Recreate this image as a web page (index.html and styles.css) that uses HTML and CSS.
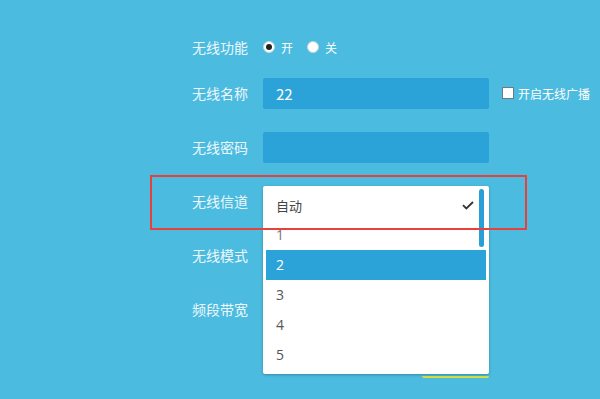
FILE: index.html
```html
<!DOCTYPE html>
<html lang="zh-CN">
<head>
<meta charset="utf-8">
<title>无线设置</title>
<link rel="stylesheet" href="styles.css">
</head>
<body>
<div class="form">
  <div class="row row-radio">
    <div class="label">无线功能</div>
    <div class="control radios">
      <span class="radio checked"></span><span class="rtext">开</span>
      <span class="radio"></span><span class="rtext">关</span>
    </div>
  </div>
  <div class="row">
    <div class="label">无线名称</div>
    <div class="control"><div class="input">22</div></div>
    <div class="extra"><span class="checkbox"></span><span class="ctext">开启无线广播</span></div>
  </div>
  <div class="row">
    <div class="label">无线密码</div>
    <div class="control"><div class="input"></div></div>
  </div>
  <div class="row">
    <div class="label">无线信道</div>
    <div class="control anchor">
      <div class="dropdown">
        <div class="opt first">自动
          <svg class="check" width="12" height="9" viewBox="0 0 12 9"><path d="M1 4.2 L4.3 7.4 L11 1" fill="none" stroke="#333" stroke-width="1.8"/></svg>
        </div>
        <div class="opt one">1</div>
        <div class="opt sel">2</div>
        <div class="opt">3</div>
        <div class="opt">4</div>
        <div class="opt">5</div>
        <div class="scrollbar"></div>
      </div>
    </div>
  </div>
  <div class="row">
    <div class="label">无线模式</div>
    <div class="control"></div>
  </div>
  <div class="row">
    <div class="label">频段带宽</div>
    <div class="control"></div>
  </div>
  <div class="save-btn"></div>
  <div class="highlight-box"></div>
</div>
</body>
</html>
```
FILE: styles.css
```css
html, body {
  margin: 0;
  padding: 0;
}
body {
  width: 600px;
  height: 399px;
  overflow: hidden;
  background: #4bbbe0;
  font-family: "Noto Sans CJK SC", "Noto Sans", sans-serif;
  color: #fff;
}
.form {
  position: relative;
  padding-top: 36px;
  height: 363px;
}
.row {
  display: flex;
  align-items: center;
  height: 32px;
  margin-bottom: 22px;
}
.row-radio {
  height: 22px;
  margin-bottom: 19px;
}
.label {
  width: 248px;
  text-align: right;
  font-size: 14px;
  line-height: 16px;
  color: #eef8fc;
}
.control {
  margin-left: 15px;
  width: 226px;
}
.radios {
  display: flex;
  align-items: center;
  font-size: 12px;
}
.radio {
  width: 12px;
  height: 12px;
  border-radius: 50%;
  background: #fff;
  box-sizing: border-box;
  border: 1px solid #c8d4da;
  display: inline-flex;
  align-items: center;
  justify-content: center;
}
.radio.checked::after {
  content: "";
  width: 6px;
  height: 6px;
  border-radius: 50%;
  background: #222;
}
.rtext {
  margin-left: 6px;
  margin-right: 14px;
}
.input {
  height: 31px;
  background: #2ca3d8;
  border-radius: 2px;
  box-sizing: border-box;
  padding-left: 13px;
  font-size: 15px;
  line-height: 31px;
  color: #fff;
}
.extra {
  margin-left: 13px;
  display: flex;
  align-items: center;
  font-size: 12px;
}
.checkbox {
  width: 12px;
  height: 12px;
  background: #fff;
  border: 1px solid #6a7c86;
  box-sizing: border-box;
}
.ctext {
  margin-left: 4px;
}
.anchor {
  position: relative;
  height: 32px;
}
.dropdown {
  position: absolute;
  left: 0;
  top: 1px;
  width: 226px;
  box-sizing: border-box;
  padding: 4px 3px 4px 3px;
  background: #fff;
  border-radius: 2px;
  box-shadow: 0 1px 3px rgba(0, 0, 0, 0.25);
  z-index: 2;
}
.opt {
  position: relative;
  height: 30px;
  line-height: 30px;
  padding-left: 10px;
  font-family: "Open Sans", "Noto Sans CJK SC", sans-serif;
  font-size: 14px;
  color: #555;
}
.opt.first {
  height: 32px;
  line-height: 32px;
  font-family: "Noto Sans CJK SC", sans-serif;
  font-size: 13px;
  color: #444;
}
.opt.one {
  height: 28px;
  line-height: 26px;
  color: #777;
}
.opt.sel {
  background: #2ca3d8;
  color: #fff;
}
.check {
  position: absolute;
  left: 196px;
  top: 11px;
}
.scrollbar {
  position: absolute;
  left: 216px;
  top: 3px;
  width: 5px;
  height: 58px;
  border-radius: 3px;
  background: #2a9fd6;
}
.save-btn {
  position: absolute;
  left: 422px;
  top: 358px;
  width: 67px;
  height: 20px;
  border-bottom: 2px solid #d9e23c;
  border-radius: 0 0 2px 2px;
  box-sizing: border-box;
}
.highlight-box {
  position: absolute;
  left: 150px;
  top: 175px;
  width: 377px;
  height: 55px;
  box-sizing: border-box;
  border: 2px solid #e8413b;
  z-index: 3;
}
```
